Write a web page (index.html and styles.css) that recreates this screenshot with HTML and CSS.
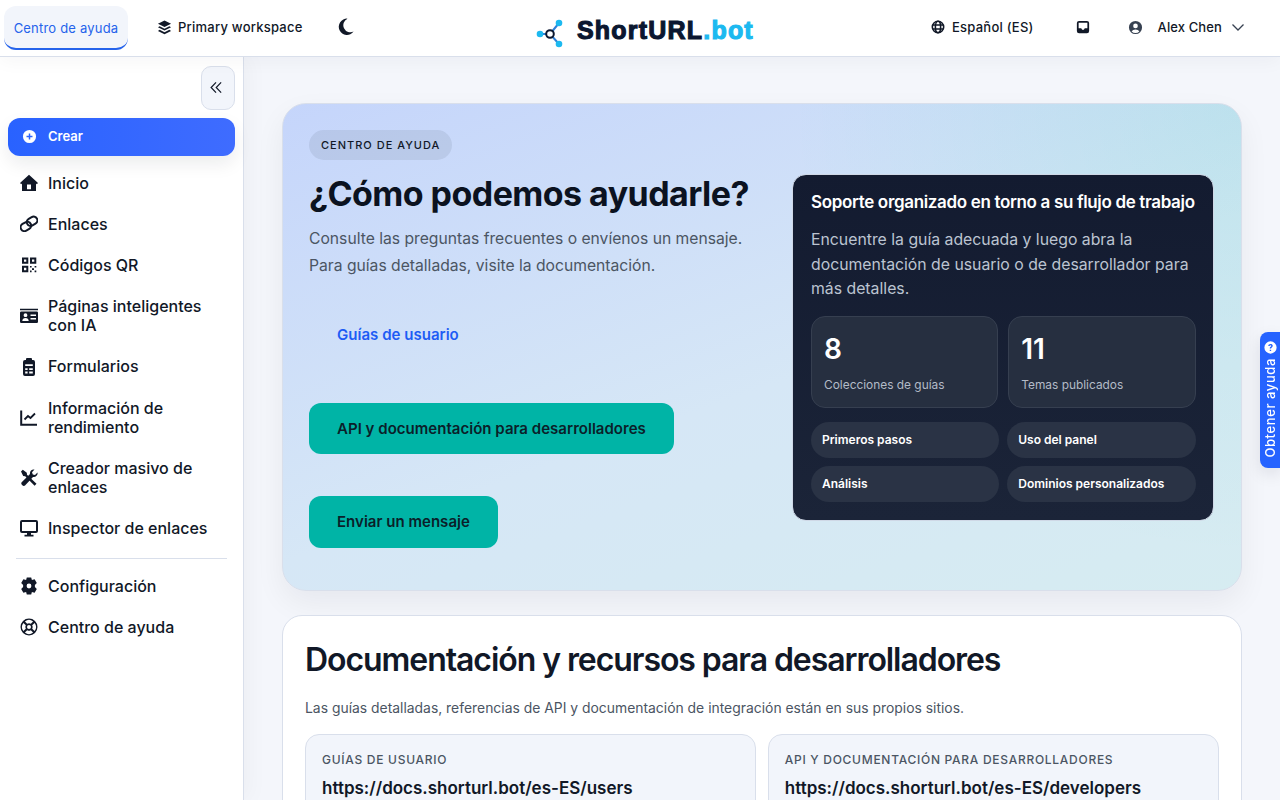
FILE: index.html
```html
<!DOCTYPE html>
<html lang="es">
<head>
<meta charset="utf-8">
<title>Centro de ayuda</title>
<link rel="stylesheet" href="styles.css">
</head>
<body>
<header class="topbar">
  <div class="top-left">
    <a class="help-tab">Centro de ayuda</a>
    <a class="workspace">
      <svg class="ic13" viewBox="0 0 16 16"><path d="M8 .5 1 4l7 3.500L15 4z"/><path d="M2.800 6.600 1 7.800l7 3.500 7-3.500-1.800-1.200L8 9.200z"/><path d="M2.800 10.400 1 11.600l7 3.500 7-3.500-1.800-1.200L8 13z"/></svg>
      <span>Primary workspace</span>
    </a>
    <svg class="moon" viewBox="0 0 16 16"><path d="M9.800.6A7.700 7.700 0 1 0 15.600 12.800 6.300 6.300 0 0 1 9.800.6z"/></svg>
  </div>
  <a class="brand">
    <svg class="brand-mark" viewBox="0 0 30 30"><path d="M14 15 23 4M4 15h10M14 15l9 10" stroke="#2f7fd6" stroke-width="2" fill="none"/><circle cx="4" cy="15" r="3.300" fill="#1cb9f0"/><circle cx="23" cy="4" r="3.300" fill="#1cb9f0"/><circle cx="23" cy="25" r="3.300" fill="#1cb9f0"/><circle cx="14" cy="15" r="3.800" fill="#fff" stroke="#0b1730" stroke-width="2"/></svg>
    <span class="brand-name">ShortURL<span class="brand-dot">.bot</span></span>
  </a>
  <div class="top-right">
    <a class="top-item lang">
      <svg class="globe" viewBox="0 0 16 16"><circle cx="8" cy="8" r="6.500" fill="none" stroke="#111827" stroke-width="1.800"/><ellipse cx="8" cy="8" rx="3" ry="6.500" fill="none" stroke="#111827" stroke-width="1.800"/><path d="M2 5.700h12M2 10.300h12" stroke="#111827" stroke-width="1.700"/></svg>
      <span>Español (ES)</span>
    </a>
    <svg class="inbox" viewBox="0 0 16 16"><path fill-rule="evenodd" d="M3.500 1h9A2.500 2.500 0 0 1 15 3.500v9a2.500 2.500 0 0 1-2.500 2.500h-9A2.500 2.500 0 0 1 1 12.500v-9A2.500 2.500 0 0 1 3.500 1zM3 3.200v6.300h3l1 1.700h2l1-1.700h3V3.200z"/></svg>
    <a class="top-item user">
      <svg class="ic13 user-ic" viewBox="0 0 16 16"><path fill-rule="evenodd" d="M8 1a7 7 0 1 1 0 14A7 7 0 0 1 8 1zM8 3.800a2.500 2.500 0 1 0 0 5 2.500 2.500 0 0 0 0-5zM3.900 12.200a5.600 5.600 0 0 0 8.200 0C11.400 10.800 9.900 10 8 10s-3.400.8-4.100 2.200z"/></svg>
      <span class="user-name">Alex Chen</span>
      <svg class="chev" viewBox="0 0 14 14"><path d="M1.500 4.500 7 10l5.500-5.500" fill="none" stroke="#374151" stroke-width="1.300"/></svg>
    </a>
  </div>
</header>
<div class="shell">
  <aside class="sidebar">
    <div class="collapse-row">
      <button class="collapse">
        <svg viewBox="0 0 14 14"><path d="M6.500 1.500 1.200 7l5.300 5.500M12 1.500 6.700 7l5.300 5.500" fill="none" stroke="#111827" stroke-width="1.300"/></svg>
      </button>
    </div>
    <a class="create">
      <svg class="ic14" viewBox="0 0 16 16"><path fill="#fff" fill-rule="evenodd" d="M8 1a7 7 0 1 1 0 14A7 7 0 0 1 8 1zM7.200 4.800v2.400H4.800v1.600h2.400v2.400h1.600V8.800h2.400V7.200H8.800V4.800z"/></svg>
      <span>Crear</span>
    </a>
    <nav class="nav">
      <a class="nav-item"><svg class="nav-ic" viewBox="0 0 18 18"><path fill-rule="evenodd" d="M9 .8 18 9l-1.200 1.300-.8-.7V17H2V9.600l-.8.7L0 9zM7 10.500v4.700h4v-4.700z"/></svg><span>Inicio</span></a>
      <a class="nav-item"><svg class="nav-ic" viewBox="0 0 18 18"><g fill="none" stroke="#111827" stroke-width="2"><rect x="6.600" y="2.400" width="11" height="7.600" rx="3.800" transform="rotate(-30 12.100 6.200)"/><rect x=".4" y="7.600" width="11" height="7.600" rx="3.800" transform="rotate(-30 5.900 11.400)"/></g></svg><span>Enlaces</span></a>
      <a class="nav-item"><svg class="nav-ic" viewBox="0 0 18 18"><path fill-rule="evenodd" d="M2 1.500h6.300v6.300H2zM4 3.500v2.300h2.300V3.500zM10 1.500h6.300v6.300H10zM12 3.500v2.300h2.300V3.500zM2 9.800h6.300v6.400H2zM4 11.800v2.400h2.300v-2.400z"/><path d="M10 10h1.600v1.600H10zM14.600 10h1.700v1.600h-1.700zM12 12.200h2v1.800h-2zM10 14.400h1.600v1.800H10zM14.600 14.400h1.700v1.800h-1.700z"/></svg><span>Códigos QR</span></a>
      <a class="nav-item"><svg class="nav-ic" viewBox="0 0 18 18"><path fill-rule="evenodd" d="M0 1.800h18v1.500H0zM1.200 4.500h15.600A1.200 1.200 0 0 1 18 5.700v9.100A1.200 1.200 0 0 1 16.800 16H1.200A1.200 1.200 0 0 1 0 14.800V5.700a1.200 1.200 0 0 1 1.200-1.200zM5.500 6.300a1.900 1.900 0 1 0 0 3.800 1.900 1.900 0 0 0 0-3.800zM2.300 14h6.400c0-1.800-1.300-3-3.200-3s-3.200 1.200-3.200 3zM10.500 7.500v1.600H16V7.500zM10.500 11v1.600H16V11z"/></svg><span>Páginas inteligentes con IA</span></a>
      <a class="nav-item"><svg class="nav-ic" viewBox="0 0 18 18"><path fill-rule="evenodd" d="M7 0h4a1 1 0 0 1 1 1v1h.800A2 2 0 0 1 15 4v12a2 2 0 0 1-2 2H5a2 2 0 0 1-2-2V4a2 2 0 0 1 2-2h1V1a1 1 0 0 1 1-1zM5.200 6.300v1.800h7.600V6.300zM5.200 10.200V12h2.400v-1.800zM9.200 10.200V12h3.600v-1.800zM5.200 13.600v1.800h2.400v-1.800zM9.200 13.600v1.800h3.600v-1.800z"/></svg><span>Formularios</span></a>
      <a class="nav-item"><svg class="nav-ic" viewBox="0 0 18 18"><path d="M1.200 1.500v14.300H17" fill="none" stroke="#111827" stroke-width="2"/><path d="M4.500 10.500 8 7l2.500 2L15 4.500" fill="none" stroke="#111827" stroke-width="1.800"/></svg><span>Información de rendimiento</span></a>
      <a class="nav-item"><svg class="nav-ic" viewBox="0 0 18 18"><path d="M1 2.500 2.800.8l4 3 .2 2 9.500 9-1.900 2L5.200 7.300l-2-.3z"/><path d="M17.500 3.500c.6 2.600-1.800 5-4.500 4.400L5 16.500c-1.500 1.700-5-1.500-3.300-3.200L10 5C9.500 2.300 11.800 0 14.500.5L12 3.200l.8 2.200 2.200.7z"/></svg><span>Creador masivo de enlaces</span></a>
      <a class="nav-item"><svg class="nav-ic" viewBox="0 0 18 18"><path fill-rule="evenodd" d="M2 1h14a2 2 0 0 1 2 2v9a2 2 0 0 1-2 2H2a2 2 0 0 1-2-2V3a2 2 0 0 1 2-2zM2 3v9h14V3z"/><path d="M7 14h4v1.700h2.500V17.500h-9v-1.800H7z"/></svg><span>Inspector de enlaces</span></a>
    </nav>
    <div class="divider"></div>
    <nav class="nav nav-low">
      <a class="nav-item"><svg class="nav-ic" viewBox="0 0 18 18"><path fill-rule="evenodd" d="M6.800.5h4.400l.7 2.600 2.700-.8 2.200 3.800-1.900 2V10l1.900 1.900-2.200 3.800-2.700-.8-.7 2.600H6.800l-.7-2.600-2.700.8L1.200 11.900 3.100 10V8.100l-1.900-2 2.200-3.800 2.700.8zM9 6.600a2.400 2.400 0 1 0 0 4.800 2.400 2.400 0 0 0 0-4.800z"/></svg><span>Configuración</span></a>
      <a class="nav-item"><svg class="nav-ic" viewBox="0 0 18 18"><path fill-rule="evenodd" d="M9 .5a8.500 8.500 0 1 1 0 17A8.500 8.500 0 0 1 9 .5zM4.900 3.400 7.200 5.800a3.700 3.700 0 0 1 3.600 0l2.300-2.400a6.800 6.800 0 0 0-8.200 0zM3.400 4.900A6.800 6.800 0 0 0 3.400 13.100l2.400-2.300a3.700 3.700 0 0 1 0-3.600zM14.600 4.900l-2.400 2.300a3.700 3.700 0 0 1 0 3.600l2.400 2.300a6.800 6.800 0 0 0 0-8.200zM7.200 12.200l-2.300 2.400a6.800 6.800 0 0 0 8.200 0l-2.300-2.400a3.700 3.700 0 0 1-3.600 0zM9 7a2 2 0 1 0 0 4 2 2 0 0 0 0-4z"/></svg><span>Centro de ayuda</span></a>
    </nav>
  </aside>
  <main class="main">
    <section class="hero">
      <div class="hero-left">
        <span class="eyebrow">CENTRO DE AYUDA</span>
        <h1 class="hero-title">¿Cómo podemos ayudarle?</h1>
        <p class="hero-copy">Consulte las preguntas frecuentes o envíenos un mensaje. Para guías detalladas, visite la documentación.</p>
        <div class="hero-actions">
          <a class="btn btn-ghost">Guías de usuario</a>
          <a class="btn btn-teal">API y documentación para desarrolladores</a>
          <a class="btn btn-teal">Enviar un mensaje</a>
        </div>
      </div>
      <aside class="panel">
        <h2 class="panel-title">Soporte organizado en torno a su flujo de trabajo</h2>
        <p class="panel-copy">Encuentre la guía adecuada y luego abra la documentación de usuario o de desarrollador para más detalles.</p>
        <div class="stats">
          <div class="stat"><strong>8</strong><span>Colecciones de guías</span></div>
          <div class="stat"><strong>11</strong><span>Temas publicados</span></div>
        </div>
        <div class="chips">
          <span class="chip">Primeros pasos</span>
          <span class="chip">Uso del panel</span>
          <span class="chip">Análisis</span>
          <span class="chip">Dominios personalizados</span>
        </div>
      </aside>
    </section>
    <section class="docs">
      <h2 class="docs-title">Documentación y recursos para desarrolladores</h2>
      <p class="docs-copy">Las guías detalladas, referencias de API y documentación de integración están en sus propios sitios.</p>
      <div class="doc-grid">
        <div class="doc-card"><div class="doc-label">GUÍAS DE USUARIO</div><div class="doc-url">https://docs.shorturl.bot/es-ES/users</div></div>
        <div class="doc-card"><div class="doc-label">API Y DOCUMENTACIÓN PARA DESARROLLADORES</div><div class="doc-url">https://docs.shorturl.bot/es-ES/developers</div></div>
      </div>
    </section>
  </main>
</div>
<a class="help-float">
  <svg viewBox="0 0 14 14"><path fill="#fff" fill-rule="evenodd" d="M7 .4a6.600 6.600 0 1 1 0 13.200A6.600 6.600 0 0 1 7 .4zM7 3.300c-1.400 0-2.300.8-2.400 2h1.500c.1-.4.400-.7.900-.7s.8.300.8.700c0 .4-.3.600-.7.900-.6.400-.9.800-.9 1.600v.3h1.500v-.2c0-.4.200-.6.700-.9.600-.4 1-1 1-1.800 0-1.200-1-1.900-2.400-1.900zM6.200 9.300v1.500h1.500V9.300z"/></svg>
  <span>Obtener ayuda</span>
</a>
</body>
</html>
```
FILE: styles.css
```css
* { box-sizing: border-box; }
html, body { height: 100%; }
body {
  margin: 0;
  height: 800px;
  overflow: hidden;
  font-family: Inter, "Liberation Sans", sans-serif;
  color: #111827;
  background: #f4f6fb;
}
a { color: inherit; text-decoration: none; }

.topbar {
  position: relative;
  z-index: 3;
  height: 57px;
  display: flex;
  align-items: center;
  justify-content: space-between;
  background: #fff;
  border-bottom: 1px solid #d9dfeb;
  box-shadow: 0 4px 18px rgba(15, 23, 42, .04);
}
.top-left { display: flex; align-items: center; padding-left: 4px; }
.help-tab {
  width: 124px;
  height: 44px;
  padding-top: 1px;
  display: flex;
  align-items: center;
  justify-content: center;
  font-size: 13px;
  letter-spacing: .2px;
  color: #2563eb;
  background: #f2f5fb;
  border-radius: 12px;
  border-bottom: 2px solid #2563eb;
}
.workspace {
  margin-left: 29px;
  margin-top: -2px;
  display: flex;
  align-items: center;
  gap: 6px;
  font-size: 13px;
  font-weight: 500;
  letter-spacing: .24px;
}
.moon { width: 17px; height: 17px; margin-left: 34px; margin-top: -4px; fill: #111827; }
.ic13 { width: 15px; height: 15px; fill: #111827; flex: none; }
.globe { width: 14px; height: 14px; flex: none; }
.brand {
  position: absolute;
  left: 536px;
  top: 15px;
  display: flex;
  align-items: flex-start;
  gap: 11px;
}
.brand-mark { width: 30px; height: 30px; margin-top: 4px; }
.brand-name {
  font-family: "Liberation Sans", sans-serif;
  font-size: 25px;
  line-height: 30px;
  font-weight: 700;
  color: #0b1730;
  letter-spacing: 1.2px;
  -webkit-text-stroke: 1.100px currentColor;
}
.brand-dot { color: #1cb9f0; }
.top-right { display: flex; align-items: center; padding-right: 35px; margin-top: -2px; }
.top-item { display: flex; align-items: center; font-size: 13px; font-weight: 500; letter-spacing: .24px; }
.lang { gap: 7px; }
.inbox { width: 14px; height: 14px; margin: 0 38px 0 42px; fill: #111827; }
.user { gap: 15px; letter-spacing: .12px; }
.user-ic { fill: #374151; }
.chev { width: 14px; height: 14px; margin-left: -6px; }

.shell { display: flex; height: 743px; }
.sidebar {
  position: relative;
  z-index: 2;
  width: 244px;
  flex: none;
  padding: 9px 8px 0;
  background: #fff;
  border-right: 1px solid #d9dfeb;
  box-shadow: 6px 0 20px rgba(15, 23, 42, .03);
}
.collapse-row { display: flex; justify-content: flex-end; }
.collapse {
  width: 34px;
  height: 44px;
  padding: 0 3px 2px 0;
  display: flex;
  align-items: center;
  justify-content: center;
  background: #f2f5fb;
  border: 1px solid #d9dfeb;
  border-radius: 10px;
}
.collapse svg { width: 13px; height: 13px; }
.create {
  margin-top: 8px;
  height: 38px;
  padding: 0 0 2px 14px;
  display: flex;
  align-items: center;
  gap: 11px;
  color: #fff;
  font-size: 13px;
  font-weight: 600;
  background: linear-gradient(90deg, #2962ff, #3f6cff);
  border-radius: 12px;
  box-shadow: 0 8px 18px rgba(15, 23, 42, .08);
}
.ic14 { width: 15px; height: 15px; flex: none; }
.nav { display: flex; flex-direction: column; gap: 3px; margin-top: 8px; }
.nav-low { margin-top: 8.400px; gap: 2.500px; }
.nav-item {
  display: flex;
  align-items: center;
  gap: 10px;
  padding: 9.600px 16px 9.600px 12px;
  font-size: 16px;
  font-weight: 500;
  line-height: 19px;
  color: #111827;
}
.nav-ic { width: 18px; height: 18px; fill: #111827; flex: none; }
.divider { height: 1px; margin: 10.400px 8px 0; background: #d9dfeb; }

.main {
  flex: 1;
  min-width: 0;
  padding: 46px 38px 0;
  overflow: hidden;
}
.hero {
  width: 959.500px;
  height: 488px;
  display: grid;
  grid-template-columns: 1fr 421.500px;
  gap: 24px;
  align-items: start;
  padding: 26px 27px 26px 26px;
  background:
    radial-gradient(circle at 100% 0, rgba(0, 210, 150, .1), rgba(0, 210, 150, 0) 42%),
    linear-gradient(160deg, #c5d5fb 0%, #d6e7f6 55%, #d6ecf1 100%);
  border: 1px solid #d9dfeb;
  border-radius: 24px;
  box-shadow: 0 12px 30px rgba(15, 23, 42, .06);
}
.eyebrow {
  display: inline-flex;
  align-items: center;
  height: 30px;
  padding: 0 12px;
  font-size: 11px;
  font-weight: 500;
  letter-spacing: 1px;
  background: rgba(15, 23, 42, .08);
  border-radius: 15px;
}
.hero-title {
  margin: 12px 0 0;
  font-size: 34px;
  line-height: 44px;
  font-weight: 700;
  letter-spacing: -.56px;
  color: #0b1220;
}
.hero-copy {
  margin: 9px 0 0;
  font-size: 15.680px;
  line-height: 27px;
  color: #4b5563;
}
.hero-actions {
  margin-top: 30px;
  display: flex;
  flex-direction: column;
  align-items: flex-start;
  gap: 42px;
}
.btn {
  display: flex;
  align-items: center;
  height: 51.500px;
  padding: 0 28px;
  font-size: 15.040px;
  font-weight: 600;
  letter-spacing: .01px;
  border-radius: 12px;
}
.btn-ghost { color: #1d5cf5; }
.btn-teal { background: #00b4a6; color: #0b1f2a; }

.panel {
  height: 347px;
  margin-top: 44px;
  padding: 17px 17px 17px 17px;
  background: linear-gradient(180deg, #131b30, #1b2438);
  border: 1px solid #cfd8e6;
  border-radius: 14px;
}
.panel-title {
  margin: 0;
  padding-left: 1px;
  font-size: 17px;
  line-height: 20px;
  font-weight: 600;
  letter-spacing: -.34px;
  color: #fff;
  white-space: nowrap;
}
.panel-copy {
  margin: 16px 0 0;
  padding-left: 1px;
  font-size: 15.800px;
  line-height: 24.500px;
  color: #bcc4d1;
}
.stats {
  margin: 14px 0 0 1px;
  display: grid;
  grid-template-columns: 1fr 1fr;
  gap: 10px;
}
.stat {
  height: 92px;
  padding: 15px 12px;
  display: flex;
  flex-direction: column;
  background: #262f40;
  border: 1px solid #363f50;
  border-radius: 14px;
}
.stat strong { font-size: 28px; line-height: 34px; font-weight: 600; color: #fff; }
.stat span { margin-top: 11px; font-size: 11.900px; line-height: 16px; color: #b3bbc7; }
.chips {
  margin: 14px 0 0 1px;
  display: grid;
  grid-template-columns: 1fr 1fr;
  gap: 8px;
}
.chip {
  height: 36px;
  display: flex;
  align-items: center;
  padding: 0 11px;
  font-size: 12px;
  font-weight: 600;
  color: #fff;
  background: #2a3345;
  border-radius: 18px;
}

.docs {
  width: 959.500px;
  margin-top: 24px;
  padding: 21px 22px 0;
  height: 300px;
  background: #fff;
  border: 1px solid #d9dfeb;
  border-radius: 20px;
}
.docs-title {
  margin: 0;
  font-size: 32px;
  line-height: 46px;
  font-weight: 600;
  letter-spacing: -1.070px;
  color: #111827;
}
.docs-copy {
  margin: 14px 0 0;
  font-size: 13.900px;
  line-height: 22px;
  color: #4b5563;
}
.doc-grid {
  margin-top: 15px;
  display: grid;
  grid-template-columns: 1fr 1fr;
  gap: 12px;
}
.doc-card {
  height: 120px;
  padding: 16px;
  background: #f2f5fb;
  border: 1px solid #d9dfeb;
  border-radius: 14px;
}
.doc-label { font-size: 12px; line-height: 18px; font-weight: 500; letter-spacing: .72px; color: #4b5563; }
.doc-url { margin-top: 8px; font-size: 17px; line-height: 22px; font-weight: 600; color: #111827; }

.help-float {
  position: fixed;
  z-index: 4;
  right: 0;
  top: 332px;
  width: 20px;
  height: 136px;
  display: flex;
  flex-direction: column;
  align-items: center;
  gap: 4px;
  padding-top: 9px;
  background: #2563ff;
  border-radius: 8px 0 0 8px;
  color: #fff;
  font-size: 13px;
  font-weight: 500;
  letter-spacing: .6px;
  box-shadow: 0 6px 16px rgba(15, 23, 42, .1);
}
.help-float span { writing-mode: vertical-rl; transform: rotate(180deg); line-height: 20px; white-space: nowrap; }
.help-float svg { width: 13px; height: 13px; flex: none; }
```
